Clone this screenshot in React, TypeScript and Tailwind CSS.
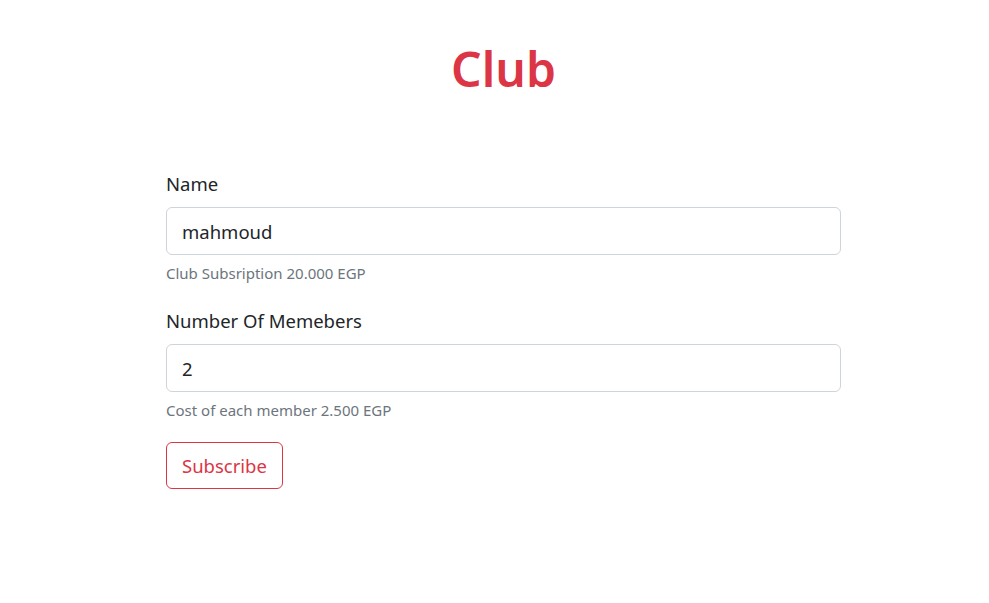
export default function App() {
  return (
    <div className="min-h-[603px] bg-white font-['Segoe_UI','Noto_Sans',sans-serif] text-[#212529]">
      <div className="ml-[166px] w-[675px] pt-[37px]">
        <h1 className="text-center text-[48px] font-semibold leading-[64px] text-[#dc3545]">Club</h1>

        <form className="mt-[70px] flex flex-col" onSubmit={(e) => e.preventDefault()}>
          <div className="mb-[23px]">
            <label className="mb-[10px] block text-[18.5px] leading-[26px]">Name</label>
            <input
              type="text"
              defaultValue="mahmoud"
              className="block h-[48px] w-full rounded-[6px] border border-[#ced4da] px-[15px] text-[18.5px] text-[#212529] outline-none"
            />
            <div className="mt-[6px] text-[15px] leading-[24px] text-[#6c757d]">Club Subsription 20.000 EGP</div>
          </div>

          <div className="mb-[20px]">
            <label className="mb-[10px] block text-[18.5px] leading-[26px]">Number Of Memebers</label>
            <input
              type="text"
              defaultValue="2"
              className="block h-[48px] w-full rounded-[6px] border border-[#ced4da] px-[15px] text-[18.5px] text-[#212529] outline-none"
            />
            <div className="mt-[6px] text-[15px] leading-[24px] text-[#6c757d]">Cost of each member 2.500 EGP</div>
          </div>

          <div>
            <button
              type="submit"
              className="h-[47px] rounded-[6px] border border-[#dc3545] px-[15px] text-[18.5px] text-[#dc3545]"
            >
              Subscribe
            </button>
          </div>
        </form>
      </div>
    </div>
  );
}
